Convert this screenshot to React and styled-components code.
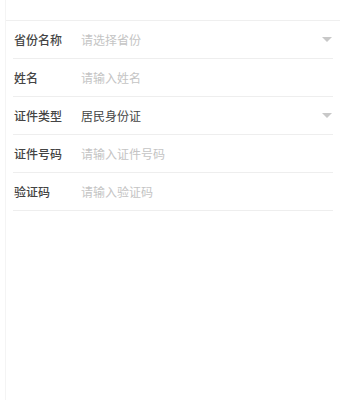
import styled, { createGlobalStyle } from "styled-components";

const GlobalStyle = createGlobalStyle`
  body {
    margin: 0;
    background: #fff;
    font-family: "Noto Sans CJK SC", "Noto Sans", sans-serif;
  }
`;

const Page = styled.div`
  margin-left: 5px;
  min-height: 400px;
  border-left: 1px solid #f4f4f4;
  background: #fff;
`;

const Header = styled.div`
  height: 20px;
  border-bottom: 1px solid #efefef;
`;

const Form = styled.div`
  padding: 0 7px 0 7px;
`;

const Row = styled.div`
  display: flex;
  align-items: center;
  height: 37px;
  border-bottom: 1px solid #eeeeee;
  padding-left: 1px;
`;

const Label = styled.span`
  width: 67px;
  flex-shrink: 0;
  font-size: 12px;
  font-weight: 500;
  color: #444;
`;

const Value = styled.span`
  flex: 1;
  font-size: 12px;
  color: ${(p) => (p.$placeholder ? "#c4c4c4" : "#444")};
`;

const Arrow = styled.span`
  width: 0;
  height: 0;
  margin-right: 1px;
  border-left: 5px solid transparent;
  border-right: 5px solid transparent;
  border-top: 5px solid #c8c8c8;
`;

const fields = [
  { label: "省份名称", text: "请选择省份", placeholder: true, select: true },
  { label: "姓名", text: "请输入姓名", placeholder: true },
  { label: "证件类型", text: "居民身份证", select: true },
  { label: "证件号码", text: "请输入证件号码", placeholder: true },
  { label: "验证码", text: "请输入验证码", placeholder: true },
];

function App() {
  return (
    <>
      <GlobalStyle />
      <Page>
        <Header />
        <Form>
          {fields.map((f) => (
            <Row key={f.label}>
              <Label>{f.label}</Label>
              <Value $placeholder={f.placeholder}>{f.text}</Value>
              {f.select && <Arrow />}
            </Row>
          ))}
        </Form>
      </Page>
    </>
  );
}

export default App;
